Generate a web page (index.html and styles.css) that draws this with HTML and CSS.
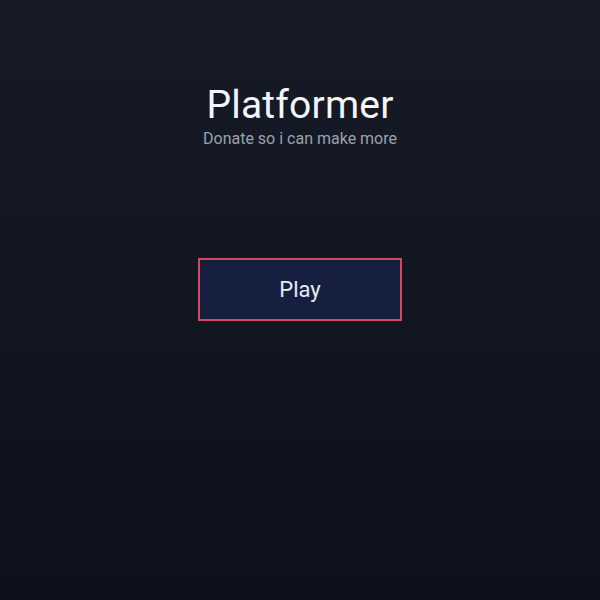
FILE: index.html
```html
<!DOCTYPE html>
<html lang="en">
<head>
<meta charset="utf-8">
<title>Platformer</title>
<link rel="stylesheet" href="styles.css">
</head>
<body>
<main class="menu">
  <header class="menu-header">
    <h1 class="menu-title">Platformer</h1>
    <p class="menu-subtitle">Donate so i can make more</p>
  </header>
  <button class="play-button" type="button">Play</button>
</main>
</body>
</html>
```
FILE: styles.css
```css
html, body {
  margin: 0;
  padding: 0;
  height: 100%;
}
body {
  background: linear-gradient(180deg, #161b27 0%, #121621 50%, #0d111b 100%);
  font-family: Roboto, "Liberation Sans", sans-serif;
  color: #f2f3f6;
}
.menu {
  display: flex;
  flex-direction: column;
  align-items: center;
  padding-top: 86px;
}
.menu-header {
  display: flex;
  flex-direction: column;
  align-items: center;
}
.menu-title {
  margin: 0;
  font-size: 39px;
  line-height: 1;
  font-weight: 400;
  letter-spacing: 0.2px;
  color: #f4f5f8;
}
.menu-subtitle {
  margin: 6px 0 0;
  font-size: 16px;
  line-height: 1;
  color: #9ba1ad;
}
.play-button {
  margin-top: 111px;
  width: 204px;
  height: 63px;
  box-sizing: border-box;
  border: 2px solid #d8475f;
  background: #152041;
  color: #e8eaf0;
  font-family: Roboto, "Liberation Sans", sans-serif;
  font-size: 22px;
  padding: 0;
  cursor: pointer;
}
```
